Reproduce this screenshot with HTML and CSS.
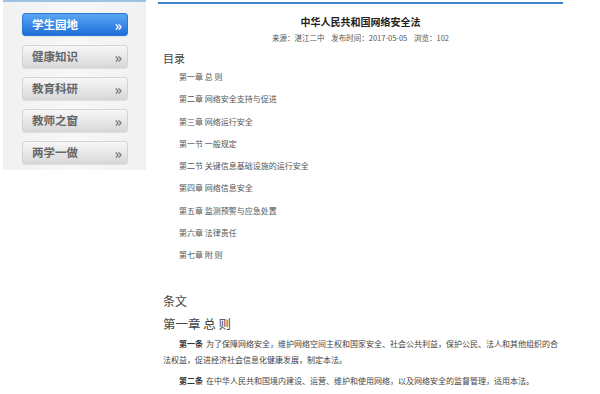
FILE: index.html
```html
<!DOCTYPE html>
<html lang="zh-CN">
<head>
  <meta charset="UTF-8">
  <title>中华人民共和国网络安全法</title>
  <link rel="stylesheet" href="styles.css">
</head>
<body>
  <div class="page">
    <div class="sidebar">
      <a class="nav-item active" href="#">学生园地<span class="arrow">»</span></a>
      <a class="nav-item" href="#">健康知识<span class="arrow">»</span></a>
      <a class="nav-item" href="#">教育科研<span class="arrow">»</span></a>
      <a class="nav-item" href="#">教师之窗<span class="arrow">»</span></a>
      <a class="nav-item" href="#">两学一做<span class="arrow">»</span></a>
    </div>

    <div class="article">
      <h1 class="title">中华人民共和国网络安全法</h1>
      <p class="meta">来源：湛江二中&nbsp;&nbsp;&nbsp;&nbsp;发布时间：2017-05-05&nbsp;&nbsp;&nbsp;&nbsp;浏览：102</p>

      <h2 class="section">目录</h2>
      <ul class="toc">
        <li>第一章 总 则</li>
        <li>第二章 网络安全支持与促进</li>
        <li>第三章 网络运行安全</li>
        <li>第一节 一般规定</li>
        <li>第二节 关键信息基础设施的运行安全</li>
        <li>第四章 网络信息安全</li>
        <li>第五章 监测预警与应急处置</li>
        <li>第六章 法律责任</li>
        <li>第七章 附 则</li>
      </ul>

      <h2 class="section clauses">条文</h2>
      <h3 class="chapter">第一章 总 则</h3>
      <p class="clause"><span class="clause-no">第一条</span>为了保障网络安全，维护网络空间主权和国家安全、社会公共利益，保护公民、法人和其他组织的合法权益，促进经济社会信息化健康发展，制定本法。</p>
      <p class="clause"><span class="clause-no">第二条</span>在中华人民共和国境内建设、运营、维护和使用网络，以及网络安全的监督管理，适用本法。</p>
    </div>
  </div>
</body>
</html>
```

FILE: styles.css
```css
body {
  margin: 0;
  background-color: #ffffff;
  font-family: "Noto Sans CJK SC", "Noto Sans", sans-serif;
  color: #444;
}

.page {
  display: flex;
  align-items: flex-start;
}

.sidebar {
  margin-left: 3px;
  width: 143px;
  padding: 11px 0 6px;
  display: flex;
  flex-direction: column;
  gap: 9px;
  background: linear-gradient(to right, #f1f1f1, #f7f7f7 50%, #f1f1f1);
  border-top: 2px solid #9cc3e4;
  box-sizing: border-box;
}

.nav-item {
  margin-left: 19px;
  width: 106px;
  height: 23px;
  box-sizing: border-box;
  padding: 0 6px 0 9px;
  display: flex;
  align-items: center;
  justify-content: space-between;
  border-radius: 3px;
  border: 1px solid #d4d4d4;
  background: linear-gradient(to bottom, #f7f7f7, #e6e6e6 55%, #d9d9d9);
  box-shadow: 0 1px 1px rgba(0, 0, 0, 0.08);
  color: #666;
  font-size: 11.5px;
  font-weight: bold;
  text-decoration: none;
  line-height: 1;
}

.nav-item.active {
  border-color: #2b78d9;
  background: linear-gradient(to bottom, #5aa6f2, #3a8ae8 50%, #1f6ed8);
  color: #ffffff;
}

.arrow {
  font-size: 14px;
  color: #777;
  letter-spacing: -1px;
}

.nav-item.active .arrow {
  color: #ffffff;
}

.article {
  margin-left: 12px;
  width: 405px;
  padding-top: 2px;
}

.title {
  margin: 0;
  padding-top: 11px;
  border-top: 2px solid #3b86c6;
  font-size: 10px;
  line-height: 14px;
  text-align: center;
  color: #222;
}

.meta {
  margin: 3px 0 0;
  font-size: 7.5px;
  line-height: 12px;
  text-align: center;
  color: #555;
}

.section {
  margin: 6px 0 0 5px;
  font-size: 11px;
  line-height: 16px;
  font-weight: normal;
  color: #444;
}

.toc {
  list-style: none;
  margin: 0;
  padding: 0 0 0 21px;
  font-size: 8px;
  line-height: 22.3px;
  color: #555;
}

.section.clauses {
  margin-top: 26px;
  font-size: 12px;
}

.chapter {
  margin: 6px 0 0 5px;
  font-size: 12.5px;
  line-height: 18px;
  font-weight: normal;
  color: #444;
}

.clause {
  margin: 3px 0 0 5px;
  text-indent: 16px;
  font-size: 8px;
  line-height: 16px;
  color: #444;
}

.clause + .clause {
  margin-top: 5px;
}

.clause-no {
  margin-right: 3px;
  font-weight: bold;
  color: #333;
}
```
